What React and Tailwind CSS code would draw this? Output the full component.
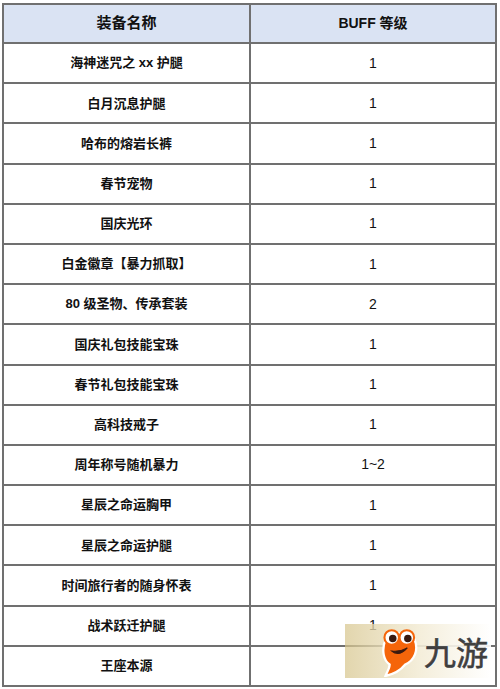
import React from "react";

const rows = [
  ["海神迷咒之 xx 护腿", "1"],
  ["白月沉息护腿", "1"],
  ["哈布的熔岩长裤", "1"],
  ["春节宠物", "1"],
  ["国庆光环", "1"],
  ["白金徽章【暴力抓取】", "1"],
  ["80 级圣物、传承套装", "2"],
  ["国庆礼包技能宝珠", "1"],
  ["春节礼包技能宝珠", "1"],
  ["高科技戒子", "1"],
  ["周年称号随机暴力", "1~2"],
  ["星辰之命运胸甲", "1"],
  ["星辰之命运护腿", "1"],
  ["时间旅行者的随身怀表", "1"],
  ["战术跃迁护腿", "1"],
  ["王座本源", ""],
];

const Logo = () => (
  <div className="absolute left-[345px] top-[624px] w-[146px] h-[54px] flex items-center bg-gradient-to-r from-[#d6c48a]/70 via-[#f3ecd6]/90 to-white/90">
    <svg width="42" height="52" viewBox="0 0 40 50" className="ml-[33px]">
      <path
        d="M7 14 C3 24 5 34 11 38 C11 42 8 46 7 49 C16 47 22 43 26 38 C35 34 39 24 35 14 C32 6 11 6 7 14 Z"
        fill="#f5650a"
        stroke="#fff"
        strokeWidth="2.2"
      />
      <circle cx="13" cy="12" r="7" fill="#fff" stroke="#f5650a" strokeWidth="2" />
      <circle cx="27.5" cy="12" r="7" fill="#fff" stroke="#f5650a" strokeWidth="2" />
      <circle cx="14" cy="13" r="3.6" fill="#3a1a10" />
      <circle cx="28.5" cy="13" r="3.6" fill="#3a1a10" />
      <path d="M13 25 Q20 31 28 22 Q21 26 13 25 Z" fill="#3a1a10" stroke="#3a1a10" strokeWidth="1" />
    </svg>
    <span
      className="ml-[4px] text-[32px] leading-none text-[#3f3f3f] font-['Noto_Sans_CJK_SC',sans-serif]"
      style={{ WebkitTextStroke: "0.6px #3f3f3f", textShadow: "0 0 2px #fff, 0 0 2px #fff" }}
    >
      九游
    </span>
  </div>
);

export default function App() {
  return (
    <div className="relative w-[500px] h-[689px] bg-white pt-[3px] pl-[2px] font-['Liberation_Sans','Noto_Sans_CJK_SC',sans-serif] text-[#111]">
      <table className="w-[495px] border-collapse border-2 border-[#707070] table-fixed">
        <thead>
          <tr className="h-[39px] bg-[#dae3f3]">
            <th className="w-[247px] border-2 border-[#707070] text-[15px] font-bold">装备名称</th>
            <th className="border-2 border-[#707070] border-l-[#222] text-[14px] font-bold">BUFF 等级</th>
          </tr>
        </thead>
        <tbody>
          {rows.map(([name, lv], i) => (
            <tr key={i} className="h-[40.2px]">
              <td className="border-2 border-[#707070] text-center text-[13px] font-bold">{name}</td>
              <td className="border-2 border-[#707070] border-l-[#222] text-center text-[14px]">{lv}</td>
            </tr>
          ))}
        </tbody>
      </table>
      <Logo />
    </div>
  );
}
